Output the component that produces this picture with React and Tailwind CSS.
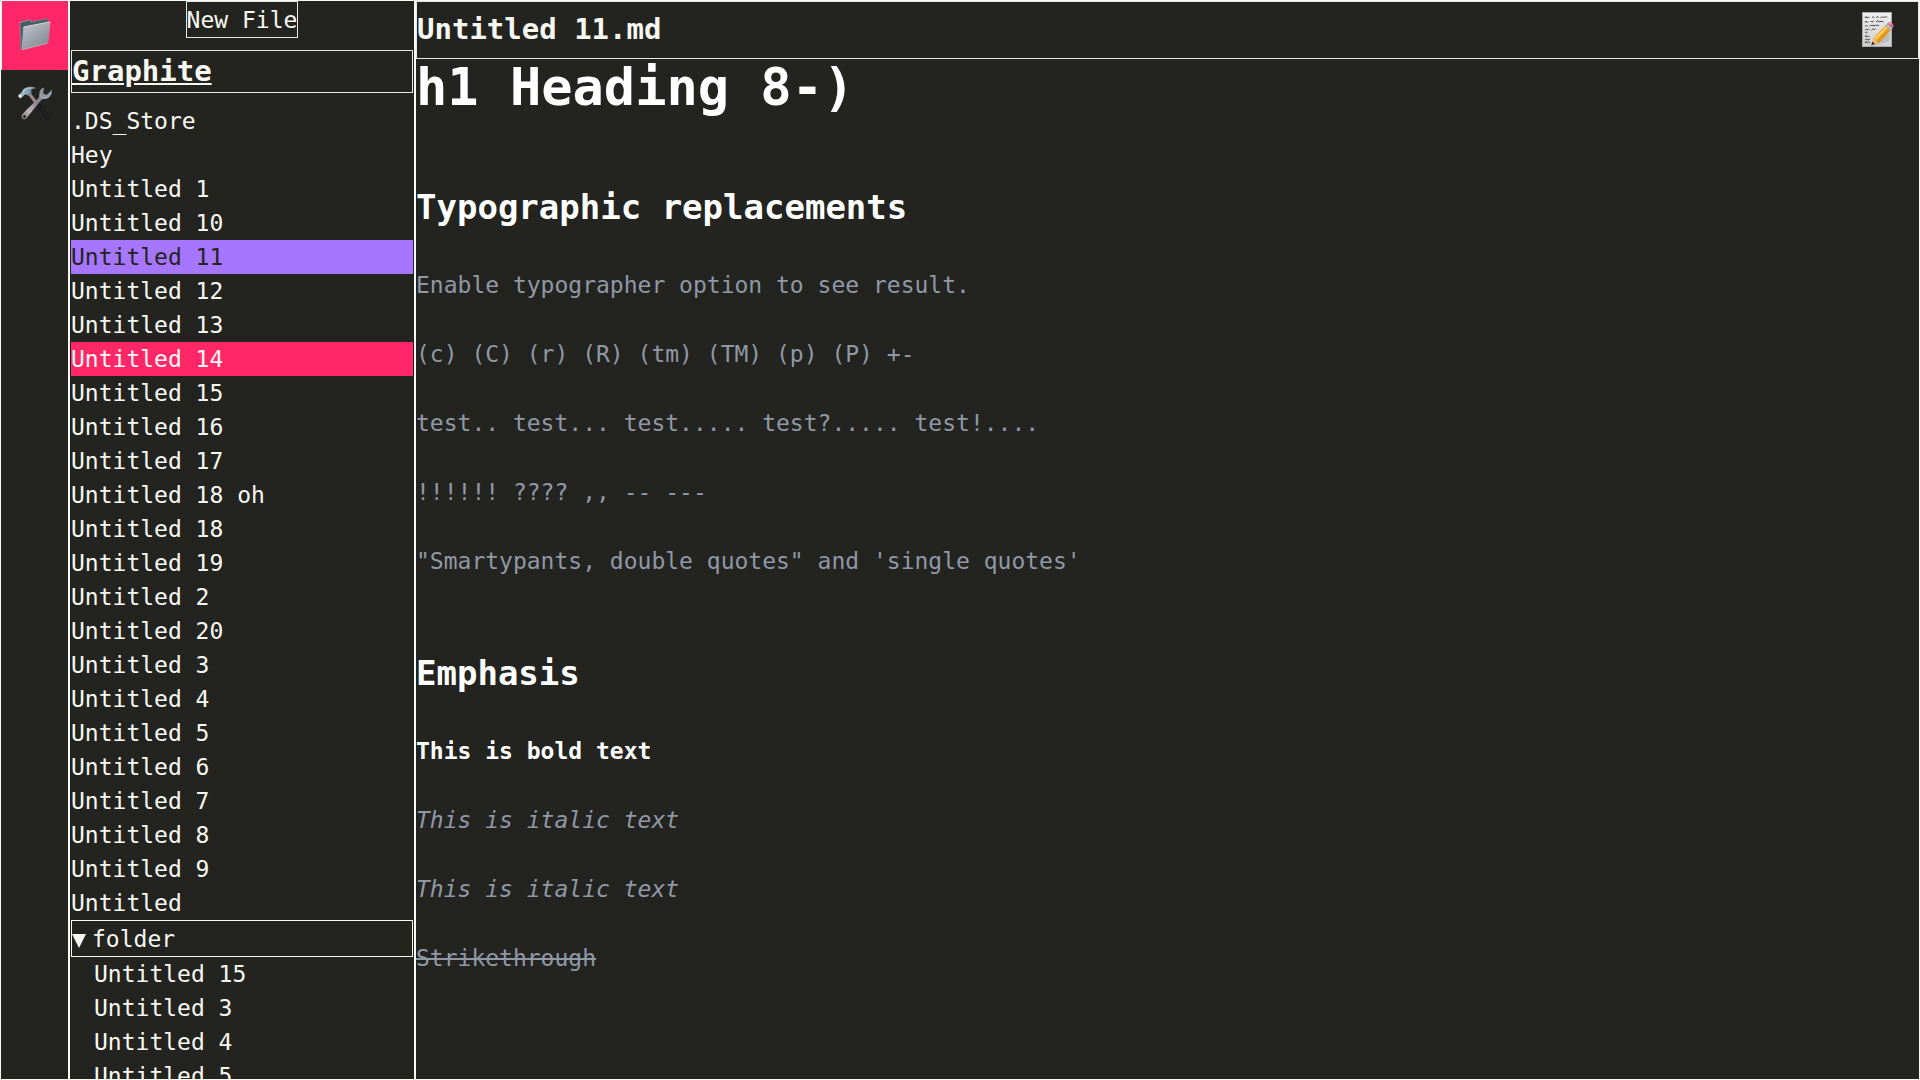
const files = [
  ".DS_Store", "Hey", "Untitled 1", "Untitled 10", "Untitled 11", "Untitled 12", "Untitled 13", "Untitled 14",
  "Untitled 15", "Untitled 16", "Untitled 17", "Untitled 18 oh", "Untitled 18", "Untitled 19", "Untitled 2",
  "Untitled 20", "Untitled 3", "Untitled 4", "Untitled 5", "Untitled 6", "Untitled 7", "Untitled 8", "Untitled 9",
  "Untitled",
];
const folderFiles = ["Untitled 15", "Untitled 3", "Untitled 4", "Untitled 5"];
const OPEN_FILE = "Untitled 11";
const HOVERED_FILE = "Untitled 14";

function FolderIcon() {
  return (
    <svg viewBox="0 0 34 34" className="size-[34px]" aria-hidden="true">
      <defs>
        <linearGradient id="folderBack" x1="0" y1="0" x2="1" y2="1">
          <stop offset="0" stopColor="#8d9aa3" />
          <stop offset="1" stopColor="#35464f" />
        </linearGradient>
        <linearGradient id="folderFront" x1="0" y1="0" x2="0.7" y2="1">
          <stop offset="0" stopColor="#c3c7cd" />
          <stop offset="0.5" stopColor="#a3a8b0" />
          <stop offset="1" stopColor="#858b93" />
        </linearGradient>
      </defs>
      <path d="M1.5 5 L11.500 2.200 L13.500 4.300 L29.500 1.200 L30.500 6 L5 31.500 L2.600 32.500 Z" fill="url(#folderBack)" />
      <path d="M2.200 6 L11.400 3.500 L13.300 5.600 L29 2.500 L29.500 5 L5 10 L4 29 Z" fill="#4a5b65" />
      <path d="M5.500 11.500 Q5.500 10 7 9.700 L31 5 Q32.500 4.800 32.300 6.500 L30.500 25 Q30.300 26.300 29 26.700 L4.500 33 Q3.300 33.200 3.500 32 Z" fill="url(#folderFront)" />
      <path d="M5.500 11.300 Q5.700 10 7 9.700 L31 5 Q32.300 4.900 32.200 6" fill="none" stroke="#dfe2e5" strokeWidth="0.8" />
      <path d="M3.800 32.700 L29.500 26.300" stroke="#c9a6b2" strokeWidth="0.8" />
    </svg>
  );
}

function ToolsIcon() {
  return (
    <svg viewBox="0 0 34 34" className="size-[34px]" aria-hidden="true">
      <defs>
        <linearGradient id="wrenchMetal" x1="1" y1="0" x2="0" y2="1">
          <stop offset="0" stopColor="#8fa1b0" />
          <stop offset="0.5" stopColor="#8d8790" />
          <stop offset="0.75" stopColor="#c1b6bc" />
          <stop offset="1" stopColor="#7d6d74" />
        </linearGradient>
        <linearGradient id="hammerMetal" x1="0" y1="0" x2="1" y2="0">
          <stop offset="0" stopColor="#a9c3d3" />
          <stop offset="0.5" stopColor="#8198a8" />
          <stop offset="1" stopColor="#50606c" />
        </linearGradient>
      </defs>
      <path d="M10.500 9 L13 7.500 L19 15.500 L17 18 Z" fill="#a3878c" />
      <path d="M16.500 17.500 L19.500 15 L32 31.500 Q31.500 33.500 29 33.200 Z" fill="#161719" />
      <path d="M19 17.500 L30.500 32" stroke="#3b3c3e" strokeWidth="0.8" />
      <path d="M25.500 1.500 Q21 3.500 21.300 8.500 Q21.500 10.500 20.500 12 L4.700 27.800 Q2.800 29.300 3.700 31.700 Q5 33.800 7.500 33.100 Q9 32.500 9.800 30.500 L23 14.200 Q24 13 26 13.100 Q31.500 13 33.500 7.500 L34 3.500 L29.800 8 Q27.500 9.500 25.500 7.300 Q24.500 5.500 26 3.500 Z" fill="url(#wrenchMetal)" />
      <path d="M22.200 8.500 Q22.300 12.500 25.800 12 Q30.500 12 32.700 7.500" fill="none" stroke="#a9b8c3" strokeWidth="1" />
      <circle cx="6.500" cy="30.500" r="1.500" fill="#232420" />
      <path d="M3.500 6.300 Q5.500 1 12 0.800 Q16.500 0.300 18.500 2.200 L14 3.300 Q12.500 4.500 13.700 7.300 L10.200 9.700 Q8 7.500 6 9 L3.500 9 Z" fill="url(#hammerMetal)" />
      <path d="M0.500 9 L3.700 6.200 L6 9.500 L2.500 12.500 Q0.300 11.500 0.500 9 Z" fill="#9db6c5" />
      <circle cx="2" cy="10" r="1.500" fill="#eefbff" />
      <path d="M5.500 4.500 Q9 1.700 15 1.800" fill="none" stroke="#c8dbe6" strokeWidth="0.8" />
    </svg>
  );
}

function MemoIcon() {
  return (
    <svg viewBox="0 0 32 36" className="h-[36px] w-[32px]" aria-hidden="true">
      <defs>
        <linearGradient id="paper" x1="0" y1="0" x2="0" y2="1">
          <stop offset="0" stopColor="#eeeeee" />
          <stop offset="1" stopColor="#cfcfcf" />
        </linearGradient>
        <linearGradient id="pencilBody" x1="0" y1="0" x2="1" y2="1">
          <stop offset="0" stopColor="#ffd35c" />
          <stop offset="0.5" stopColor="#f3a828" />
          <stop offset="1" stopColor="#b9690f" />
        </linearGradient>
      </defs>
      <rect x="0.5" y="0.5" width="29" height="34" fill="url(#paper)" stroke="#a9a9a9" />
      <g fill="none" stroke="#4c4c4c" strokeWidth="1">
        <path d="M3 6 l1 -1.500 l1 1.500 l1.500 -1 l1 1 M10 5.500 l1.500 -.8 l.8 1 M14.500 5.800 l1 -1.500 l1.200 1.500 M18.500 5.700 l1 -1 l1 1 l1.200 -1 l1 1.200 l1.500 -1.500 l1 1" />
        <path d="M3 10.500 l1 -1.500 l1.300 1.500 l1 -1 M8.500 10 l1 -1 l1 1.200 l1 -1.500 M14 10 l1.500 -1.500 l1 1.500 l1.500 -1 l1 1 l1 -1 l1.500 1" />
        <path d="M3 14.500 l1.500 -1.500 l1 1.500 M7.500 14 l1.200 -1 l1 1 l1.300 -1 l1 1.200 l1.500 -1.500 l1 1.200 l1.500 -1 l1 1" />
        <path d="M3 18.200 l1.200 -1.200 l1 1 l1.300 -1 l1 1 M9.500 18 l1.500 -1.200 l1 1 l1.500 -1" />
        <path d="M3 21 l1.500 -.8 l1 .8 M3 25 l1 -1.500 l1.200 1.500 l1.300 -1 l1 1 M3 28 l1.500 -1 l1.500 1 l2 -1 M3 31 l1 -1.500 l1.200 1.500 l1.300 -1 l1.500 .5" />
      </g>
      <path d="M10 34 L27 29 L29 22 L26 20 Z" fill="#a6a6a6" opacity="0.5" />
      <path d="M9.200 33.300 L11.500 26 L16.500 31 Z" fill="#e9bd85" />
      <path d="M9.200 33.300 L10.500 29.500 L13 32 Z" fill="#35291f" />
      <path d="M11.500 26 L23 13.500 L28.500 18.800 L17 31 Q15.500 31.500 15 29.500 Q13 29.500 13 27.500 Q11.500 27.500 11.500 26 Z" fill="url(#pencilBody)" />
      <path d="M13.500 27 L25 15 " stroke="#ffe08a" strokeWidth="1.200" />
      <path d="M15.500 29.500 L27 17.300" stroke="#cf8416" strokeWidth="0.8" />
      <path d="M23 13.500 L25.300 11.200 L30.700 16.300 L28.500 18.800 Z" fill="#9aa4ad" />
      <path d="M24.200 12.500 L29.500 17.500" stroke="#e0e6ea" strokeWidth="0.8" />
      <path d="M25.300 11.200 Q27.800 9.300 30.500 11.500 Q32.500 14 30.700 16.300 Z" fill="#e2637a" />
      <path d="M26.500 11.500 Q28.500 10.500 30 12.500" fill="none" stroke="#f4a0ae" strokeWidth="1" />
    </svg>
  );
}

function FileRow({ name, active, hovered, nested }) {
  const tone = active ? "bg-[#a776ff] text-[#232420]" : hovered ? "bg-[#ff2768]" : "";
  return (
    <li>
      <button type="button" className={`block w-full text-left leading-[34px] ${nested ? "pl-[23px]" : ""} ${tone}`}>
        {name}
      </button>
    </li>
  );
}

export default function App() {
  return (
    <div className="flex h-screen overflow-hidden border border-[#f8f8f2] bg-[#232420] font-['DejaVu_Sans_Mono',monospace] text-[23px] text-[#f8f8f2]">
      <nav className="flex w-[67px] shrink-0 flex-col" aria-label="Views">
        <button type="button" aria-label="Files" className="flex h-[69px] items-center justify-center border-l border-[#f8f8f2] bg-[#ff2768] pb-[3px]">
          <FolderIcon />
        </button>
        <button type="button" aria-label="Settings" className="flex h-[69px] items-center justify-center pb-[3px]">
          <ToolsIcon />
        </button>
      </nav>

      <aside className="flex w-[348px] shrink-0 flex-col overflow-hidden border-x-2 border-[#f8f8f2] px-px">
        <button type="button" className="shrink-0 self-center border border-gray-200 pt-[2px] leading-[33px]">New File</button>
        <h1 className="mt-3 shrink-0 border border-gray-200 text-[29px] leading-[41px] font-bold underline">Graphite</h1>
        <ul className="mt-[11px]">
          {files.map((name) => (
            <FileRow key={name} name={name} active={name === OPEN_FILE} hovered={name === HOVERED_FILE} />
          ))}
        </ul>
        <button type="button" aria-expanded="true" className="flex shrink-0 items-center gap-[6px] border border-[#f8f8f2] pt-[2px] text-left leading-[33px]">
          <svg viewBox="0 0 14 14" className="mt-0.5 size-[14px]" aria-hidden="true">
            <path d="M0 0 H14 L7 14 Z" fill="currentColor" />
          </svg>
          folder
        </button>
        <ul>
          {folderFiles.map((name) => (
            <FileRow key={name} name={name} nested />
          ))}
        </ul>
      </aside>

      <main className="flex min-w-0 flex-1 flex-col">
        <header className="flex h-[58px] shrink-0 items-center justify-between border border-gray-200 pr-6">
          <h2 className="text-[29px] font-bold">Untitled 11.md</h2>
          <button type="button" aria-label="Edit note"><MemoIcon /></button>
        </header>
        <article className="min-h-0 flex-1 overflow-hidden leading-[40px] text-[#9098a6]">
          <h1 className="text-[52px] leading-[56px] font-extrabold text-white">h1 Heading 8-)</h1>
          <h2 className="mt-[69px] mb-[35px] text-[34px] leading-[46px] font-bold text-white">Typographic replacements</h2>
          <div className="flex flex-col gap-[29px]">
            <p>Enable typographer option to see result.</p>
            <p>(c) (C) (r) (R) (tm) (TM) (p) (P) +-</p>
            <p>test.. test... test..... test?..... test!....</p>
            <p>!!!!!! ???? ,, -- ---</p>
            <p>"Smartypants, double quotes" and 'single quotes'</p>
          </div>
          <h2 className="mt-[69px] mb-[35px] text-[34px] leading-[46px] font-bold text-white">Emphasis</h2>
          <div className="flex flex-col gap-[29px]">
            <p><strong className="font-bold text-white">This is bold text</strong></p>
            <p><em>This is italic text</em></p>
            <p><em>This is italic text</em></p>
            <p><s>Strikethrough</s></p>
          </div>
        </article>
      </main>
    </div>
  );
}
